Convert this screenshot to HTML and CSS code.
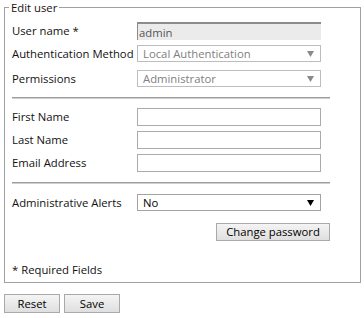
FILE: index.html
```html
<!DOCTYPE html>
<html>
<head>
<meta charset="utf-8">
<link rel="stylesheet" href="styles.css">
</head>
<body>
<div class="page">
  <fieldset class="box">
    <legend class="box-title">Edit user</legend>
    <div class="form">
      <div class="row row-user">
        <label class="label">User name *</label>
        <input class="field field-ro" type="text" value="admin" readonly>
      </div>
      <div class="row row-auth">
        <label class="label">Authentication Method</label>
        <div class="sel-wrap">
          <select class="sel" disabled><option>Local Authentication</option></select>
          <svg class="arrow arrow-dis" width="7" height="6" viewBox="0 0 7 6"><polygon points="0,0 7,0 3.5,6"/></svg>
        </div>
      </div>
      <div class="row row-perm">
        <label class="label">Permissions</label>
        <div class="sel-wrap">
          <select class="sel" disabled><option>Administrator</option></select>
          <svg class="arrow arrow-dis" width="7" height="6" viewBox="0 0 7 6"><polygon points="0,0 7,0 3.5,6"/></svg>
        </div>
      </div>
      <hr class="sep sep-1">
      <div class="row row-first">
        <label class="label">First Name</label>
        <input class="field" type="text">
      </div>
      <div class="row row-next">
        <label class="label">Last Name</label>
        <input class="field" type="text">
      </div>
      <div class="row row-next">
        <label class="label">Email Address</label>
        <input class="field" type="text">
      </div>
      <hr class="sep sep-2">
      <div class="row row-alerts">
        <label class="label">Administrative Alerts</label>
        <div class="sel-wrap">
          <select class="sel sel-on"><option>No</option></select>
          <svg class="arrow" width="7" height="6" viewBox="0 0 7 6"><polygon points="0,0 7,0 3.5,6"/></svg>
        </div>
      </div>
      <div class="row row-btn">
        <button class="btn btn-pass" type="button">Change password</button>
      </div>
      <div class="required">* Required Fields</div>
    </div>
  </fieldset>
  <div class="actions">
    <button class="btn btn-act" type="button">Reset</button>
    <button class="btn btn-act" type="button">Save</button>
  </div>
</div>
</body>
</html>
```
FILE: styles.css
```css
* { box-sizing: border-box; }

body {
  margin: 0;
  background: #fff;
  font-family: "Open Sans", "Noto Sans", sans-serif;
  font-size: 11.3px;
  color: #111;
}

.page {
  padding: 0 3px 0 4px;
}

.box {
  margin: 0;
  width: 357px;
  border: 1px solid #a0a0a0;
  padding: 0 0 5px 7px;
  min-width: 0;
}

.box-title {
  margin-left: -3px;
  padding: 0 2px;
  line-height: 15px;
  color: #1a1010;
}

.form {
  width: 318px;
  display: flex;
  flex-direction: column;
}

.row {
  display: flex;
  align-items: center;
}

.label {
  width: 125px;
  flex: none;
  line-height: 14px;
}

.row-user { margin-top: 7px; height: 18px; }
.row-auth { margin-top: 5px; height: 17px; }
.row-perm { margin-top: 8px; height: 17px; }
.row-first { margin-top: 9px; height: 18px; }
.row-next { margin-top: 5px; height: 18px; }
.row-alerts { margin-top: 10px; height: 17px; }
.row-btn { margin-top: 12px; height: 18px; justify-content: flex-end; }

.sep {
  margin: 0;
  height: 2px;
  border: 0;
  border-top: 1px solid #9d9d9d;
  border-bottom: 1px solid #cfcfcf;
}
.sep-1 { margin-top: 10px; }
.sep-2 { margin-top: 10px; }

.field {
  width: 184px;
  height: 18px;
  margin: 0;
  padding: 0 3px;
  border: 1px solid #ababab;
  background: #fff;
  font: inherit;
  color: #111;
  outline: none;
}

.field-ro {
  background: #ebebeb;
  border-style: solid;
  border-width: 2px 0 0 1px;
  border-color: #8c8c8c #ebebeb #ebebeb #8c8c8c;
  padding: 0 1px;
  color: #555;
}

.sel-wrap {
  position: relative;
  width: 184px;
  height: 100%;
}

.sel {
  appearance: none;
  -webkit-appearance: none;
  width: 100%;
  height: 100%;
  margin: 0;
  padding: 0 0 0 5px;
  border: 1px solid #bdbdbd;
  border-radius: 0;
  background: #fff;
  font: inherit;
  line-height: 15px;
  color: #808080;
  opacity: 1;
}

.sel-on {
  border-color: #a3a3a3;
  color: #000;
}

.arrow {
  position: absolute;
  right: 7px;
  top: 6px;
  fill: #000;
}

.arrow-dis { fill: #8a8a8a; }

.btn {
  margin: 0;
  padding: 0;
  border: 1px solid #a9a9a9;
  border-radius: 0;
  background: linear-gradient(#f4f4f4, #dfdfdf);
  font: inherit;
  color: #000;
  line-height: 14px;
}

.btn-pass {
  width: 114px;
  height: 18px;
}

.required {
  margin-top: 22px;
  line-height: 14px;
}

.actions {
  display: flex;
  gap: 4px;
  margin-top: 11px;
}

.btn-act {
  width: 56px;
  height: 19px;
}
```
